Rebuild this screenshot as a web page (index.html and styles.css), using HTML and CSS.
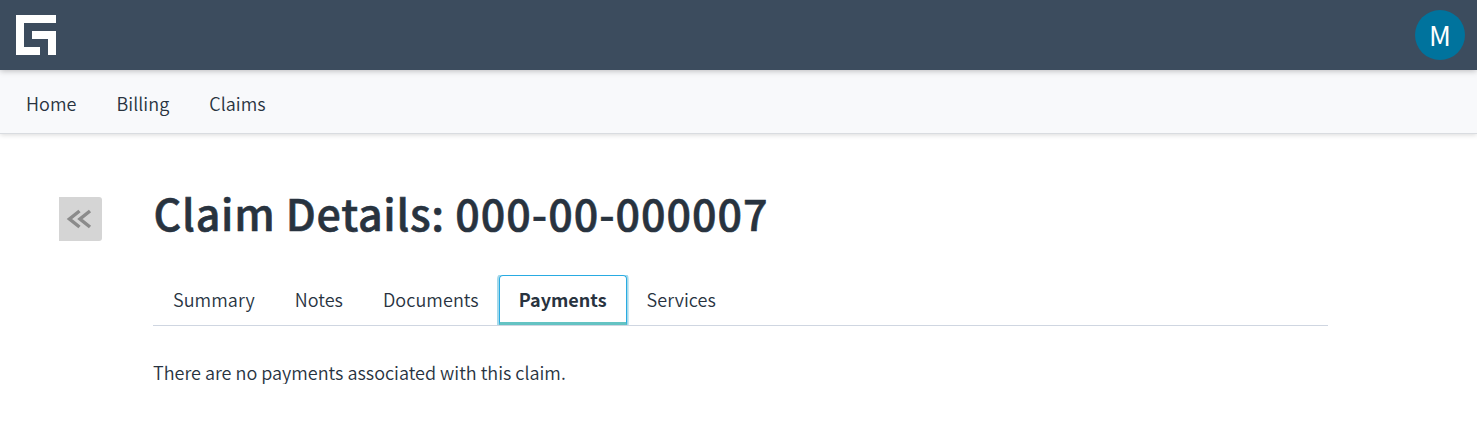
FILE: index.html
```html
<!DOCTYPE html>
<html lang="en">
<head>
<meta charset="utf-8">
<title>Claim Details</title>
<link rel="stylesheet" href="styles.css">
</head>
<body>
<header class="topbar">
  <svg class="logo" width="40" height="40" viewBox="0 0 40 40" aria-label="Logo"><path fill="#fff" d="M0 0H40V8H8V32H24V40H0ZM16 16H40V40H32V24H16Z"/></svg>
  <div class="avatar">M</div>
</header>
<nav class="nav">
  <a>Home</a>
  <a>Billing</a>
  <a>Claims</a>
</nav>
<main class="page">
  <button class="collapse" aria-label="Collapse"><svg width="43" height="44" viewBox="0 0 43 44"><path d="M20.500 14L10.500 22L20.500 30M31 14L21 22L31 30" fill="none" stroke="#8b8b8b" stroke-width="3.500"/></svg></button>
  <section class="content">
    <h1 class="title">Claim Details: <span class="claim-number">000-00-000007</span></h1>
    <div class="tabs">
      <a class="tab">Summary</a>
      <a class="tab">Notes</a>
      <a class="tab">Documents</a>
      <a class="tab tab-active">Payments</a>
      <a class="tab">Services</a>
    </div>
    <p class="message">There are no payments associated with this claim.</p>
  </section>
</main>
</body>
</html>
```
FILE: styles.css
```css
* { box-sizing: border-box; }
body {
  margin: 0;
  background: #fff;
  color: #28333f;
  font-family: "Noto Sans CJK SC", "Noto Sans", sans-serif;
  font-size: 18px;
  font-weight: 350;
  line-height: 24px;
}
.topbar {
  display: flex;
  justify-content: space-between;
  height: 70px;
  padding: 10px 12px 10px 16px;
  background: #3c4c5e;
  box-shadow: 0 1px 6px rgba(0, 0, 0, 0.25);
  position: relative;
}
.logo { margin-top: 5px; }
.avatar {
  width: 50px;
  height: 50px;
  border-radius: 50%;
  background: #00739d;
  color: #fff;
  font-size: 27px;
  font-weight: 400;
  line-height: 50px;
  text-align: center;
}
.nav {
  display: flex;
  gap: 40px;
  height: 64px;
  padding: 21px 26px 0;
  background: #f8f9fb;
  border-bottom: 1px solid #d9dce0;
  box-shadow: 0 1px 5px rgba(0, 0, 0, 0.15);
  letter-spacing: 0.05px;
}
.page { display: flex; padding: 63px 0 0 59px; }
.collapse {
  width: 43px;
  height: 44px;
  padding: 0;
  border: 0;
  border-radius: 0 3px 3px 0;
  background: #d5d5d5;
}
.collapse svg { display: block; }
.content { width: 1175px; margin-left: 51px; }
.title {
  height: 60px;
  margin: -15px 0 33px;
  padding-left: 0.6px;
  font-size: 43px;
  font-weight: 500;
  line-height: 60px;
  letter-spacing: 0.72px;
  white-space: nowrap;
  -webkit-text-stroke: 0.6px #28333f;
}
.claim-number { letter-spacing: 1px; }
.tabs {
  display: flex;
  height: 51px;
  border-bottom: 1px solid #cfd6e1;
  letter-spacing: 0.06px;
}
.tab { padding: 12px 20px 0; }
.tab-active {
  height: 50px;
  padding: 11px 19px 0;
  border: 1px solid #29abe2;
  border-bottom: 3px solid #64c3c3;
  border-radius: 4px 4px 0 0;
  box-shadow: 0 0 0 2px #a5d9ea;
  clip-path: inset(0 -2px 0 -2px);
  font-weight: 700;
  letter-spacing: 0;
}
.message { margin: 34px 0 0; }
```
